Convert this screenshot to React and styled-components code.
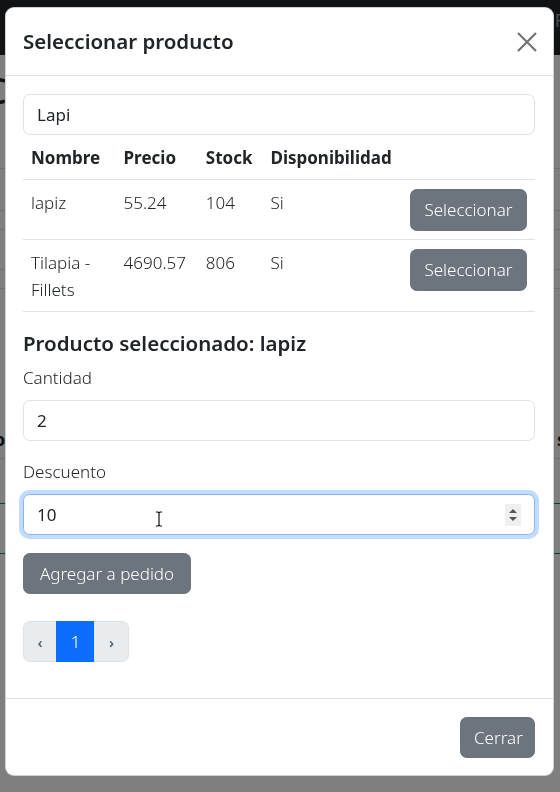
import React from "react";
import styled, { createGlobalStyle } from "styled-components";

const GlobalStyle = createGlobalStyle`
  html, body {
    margin: 0;
    padding: 0;
    background: #ffffff;
    font-family: "Noto Sans", "Open Sans", sans-serif;
    color: #212529;
  }
  * { box-sizing: border-box; }
`;

// ---- page behind the modal ----
const Page = styled.div`
  width: 560px;
  height: 792px;
  overflow: hidden;
  background: #ffffff;
`;

const Navbar = styled.div`
  height: 55px;
  background: #212529;
  display: flex;
  justify-content: flex-end;
  padding-top: 8px;
`;

const NavLink = styled.span`
  color: rgba(255, 255, 255, 0.55);
  font-size: 18px;
  margin-right: -16px;
`;

const PageTitle = styled.div`
  font-size: 36px;
  font-weight: 500;
  margin: 16px 0 0 -16px;
  line-height: 40px;
`;

const BgLine = styled.div`
  height: 1px;
  background: ${(p) => p.color || "#dee2e6"};
  margin-top: ${(p) => p.gap}px;
`;

const BgHeadRow = styled.div`
  display: flex;
  justify-content: space-between;
  font-weight: 700;
  font-size: 18px;
  line-height: 24px;
  margin: 138px -6px 0 -6px;
`;

// ---- modal ----
const Backdrop = styled.div`
  position: fixed;
  inset: 0;
  background: rgba(0, 0, 0, 0.5);
  padding: 7px 6px 0 5px;
`;

const Dialog = styled.div`
  width: 549px;
  background: #ffffff;
  border: 1px solid rgba(0, 0, 0, 0.175);
  border-radius: 9px;
  display: flex;
  flex-direction: column;
`;

const Header = styled.div`
  display: flex;
  align-items: center;
  justify-content: space-between;
  padding: 17px 15px 17px 17px;
  border-bottom: 1px solid #dee2e6;
`;

const Title = styled.h5`
  margin: 0;
  font-size: 20.5px;
  font-weight: 600;
  line-height: 33px;
`;

const CloseButton = styled.button`
  border: 0;
  background: transparent;
  padding: 0;
  width: 22px;
  height: 22px;
  display: flex;
  align-items: center;
  justify-content: center;
  opacity: 0.55;
`;

const Body = styled.div`
  padding: 18px 18px 18px 17px;
`;

const Input = styled.input`
  display: block;
  width: 100%;
  height: 41px;
  padding: 6px 13px;
  font: inherit;
  font-size: 17px;
  color: #212529;
  background: #ffffff;
  border: 1px solid ${(p) => (p.$focus ? "#86b7fe" : "#dee2e6")};
  border-radius: 6.75px;
  outline: none;
  box-shadow: ${(p) => (p.$focus ? "0 0 0 4px rgba(13,110,253,0.25)" : "none")};
`;

const Table = styled.table`
  width: 100%;
  border-collapse: collapse;
  margin-bottom: 18px;
  font-size: 17px;
  line-height: 27px;
`;

const Th = styled.th`
  text-align: left;
  font-weight: 700;
  padding: 9px 8px 8px;
  border-bottom: 1px solid #dee2e6;
  width: ${(p) => p.w}px;
`;

const Td = styled.td`
  vertical-align: top;
  padding: 9px 8px 8px;
  border-bottom: 1px solid #dee2e6;
  text-align: ${(p) => (p.right ? "right" : "left")};
  font-weight: 300;
`;

const Button = styled.button`
  font: inherit;
  font-size: 17px;
  font-weight: 300;
  line-height: 26px;
  color: #ffffff;
  background: #6c757d;
  border: 1px solid #6c757d;
  border-radius: 6.75px;
  padding: 6px 13px;
  height: ${(p) => p.h || 41}px;
  width: ${(p) => (p.w ? `${p.w}px` : "auto")};
`;

const SubTitle = styled.h5`
  margin: 0 0 7px;
  font-size: 20.5px;
  font-weight: 600;
  line-height: 27px;
`;

const Field = styled.div`
  margin-bottom: ${(p) => p.mb}px;
`;

const Label = styled.label`
  display: block;
  font-size: 17px;
  font-weight: 300;
  line-height: 27px;
  margin-bottom: 9px;
`;

const InputWrap = styled.div`
  position: relative;
`;

const Spinner = styled.span`
  position: absolute;
  right: 14px;
  top: 10px;
  width: 16px;
  height: 22px;
  background: #efefef;
  display: flex;
  align-items: center;
  justify-content: center;
`;

const Cursor = styled.span`
  position: absolute;
  left: 132px;
  top: 17px;
  display: flex;
`;

const Pagination = styled.ul`
  list-style: none;
  display: flex;
  margin: 27px 0 18px;
  padding: 0;
`;

const PageItem = styled.li`
  width: ${(p) => p.w}px;
  height: 41px;
  display: flex;
  align-items: center;
  justify-content: center;
  font-size: ${(p) => (p.active ? 17 : 15)}px;
  font-weight: ${(p) => (p.active ? 300 : 600)};
  color: ${(p) => (p.active ? "#ffffff" : "#5c636a")};
  background: ${(p) => (p.active ? "#0d6efd" : "#e9ecef")};
  border: 1px solid ${(p) => (p.active ? "#0d6efd" : "#dee2e6")};
  margin-left: ${(p) => (p.first ? 0 : -1)}px;
  border-radius: ${(p) => p.radius || "0"};
`;

const Footer = styled.div`
  display: flex;
  justify-content: flex-end;
  padding: 18px 18px 17px;
  border-top: 1px solid #dee2e6;
`;

const rows = [
  { name: ["lapiz"], price: "55.24", stock: "104", disp: "Si" },
  { name: ["Tilapia -", "Fillets"], price: "4690.57", stock: "806", disp: "Si" },
];

const App = () => {
  return (
    <>
      <GlobalStyle />
      <Page>
        <Navbar>
          <NavLink>Re</NavLink>
        </Navbar>
        <PageTitle>C</PageTitle>
        <BgLine gap={57} />
        <BgLine gap={41} />
        <BgLine gap={18} />
        <BgLine gap={39} />
        <BgLine gap={18} />
        <BgHeadRow>
          <span>o</span>
          <span>s</span>
        </BgHeadRow>
        <BgLine gap={7} />
        <BgLine gap={44} color="#198754" />
        <BgLine gap={49} color="#198754" />
      </Page>

      <Backdrop>
        <Dialog>
          <Header>
            <Title>Seleccionar producto</Title>
            <CloseButton aria-label="Close">
              <svg width="20" height="20" viewBox="0 0 20 20">
                <path d="M1 1L19 19M19 1L1 19" stroke="#000" strokeWidth="2.2" />
              </svg>
            </CloseButton>
          </Header>

          <Body>
            <Input defaultValue="Lapi" />
            <Table>
              <thead>
                <tr>
                  <Th w={94}>Nombre</Th>
                  <Th w={83}>Precio</Th>
                  <Th w={65}>Stock</Th>
                  <Th w={140}>Disponibilidad</Th>
                  <Th />
                </tr>
              </thead>
              <tbody>
                {rows.map((r) => (
                  <tr key={r.price}>
                    <Td>
                      {r.name.map((n) => (
                        <div key={n}>{n}</div>
                      ))}
                    </Td>
                    <Td>{r.price}</Td>
                    <Td>{r.stock}</Td>
                    <Td>{r.disp}</Td>
                    <Td right>
                      <Button w={117} h={42}>Seleccionar</Button>
                    </Td>
                  </tr>
                ))}
              </tbody>
            </Table>

            <SubTitle>Producto seleccionado: lapiz</SubTitle>
            <Field mb={17}>
              <Label>Cantidad</Label>
              <Input defaultValue="2" />
            </Field>
            <Field mb={18}>
              <Label>Descuento</Label>
              <InputWrap>
                <Input defaultValue="10" $focus />
                <Cursor>
                  <svg width="8" height="16" viewBox="0 0 8 16">
                    <path d="M1 1h2l1 1 1-1h2M4 2v12M1 15h2l1-1 1 1h2" stroke="#111" strokeWidth="1.2" fill="none" />
                  </svg>
                </Cursor>
                <Spinner>
                  <svg width="10" height="16" viewBox="0 0 10 16">
                    <path d="M1 6L5 2L9 6Z M1 10L5 14L9 10Z" fill="#555" />
                  </svg>
                </Spinner>
              </InputWrap>
            </Field>
            <Button w={168} h={41}>Agregar a pedido</Button>

            <Pagination>
              <PageItem w={34} first radius="6.75px 0 0 6.75px">‹</PageItem>
              <PageItem w={39} active>1</PageItem>
              <PageItem w={35} radius="0 6.75px 6.75px 0">›</PageItem>
            </Pagination>
          </Body>

          <Footer>
            <Button w={75} h={41}>Cerrar</Button>
          </Footer>
        </Dialog>
      </Backdrop>
    </>
  );
};

export default App;
